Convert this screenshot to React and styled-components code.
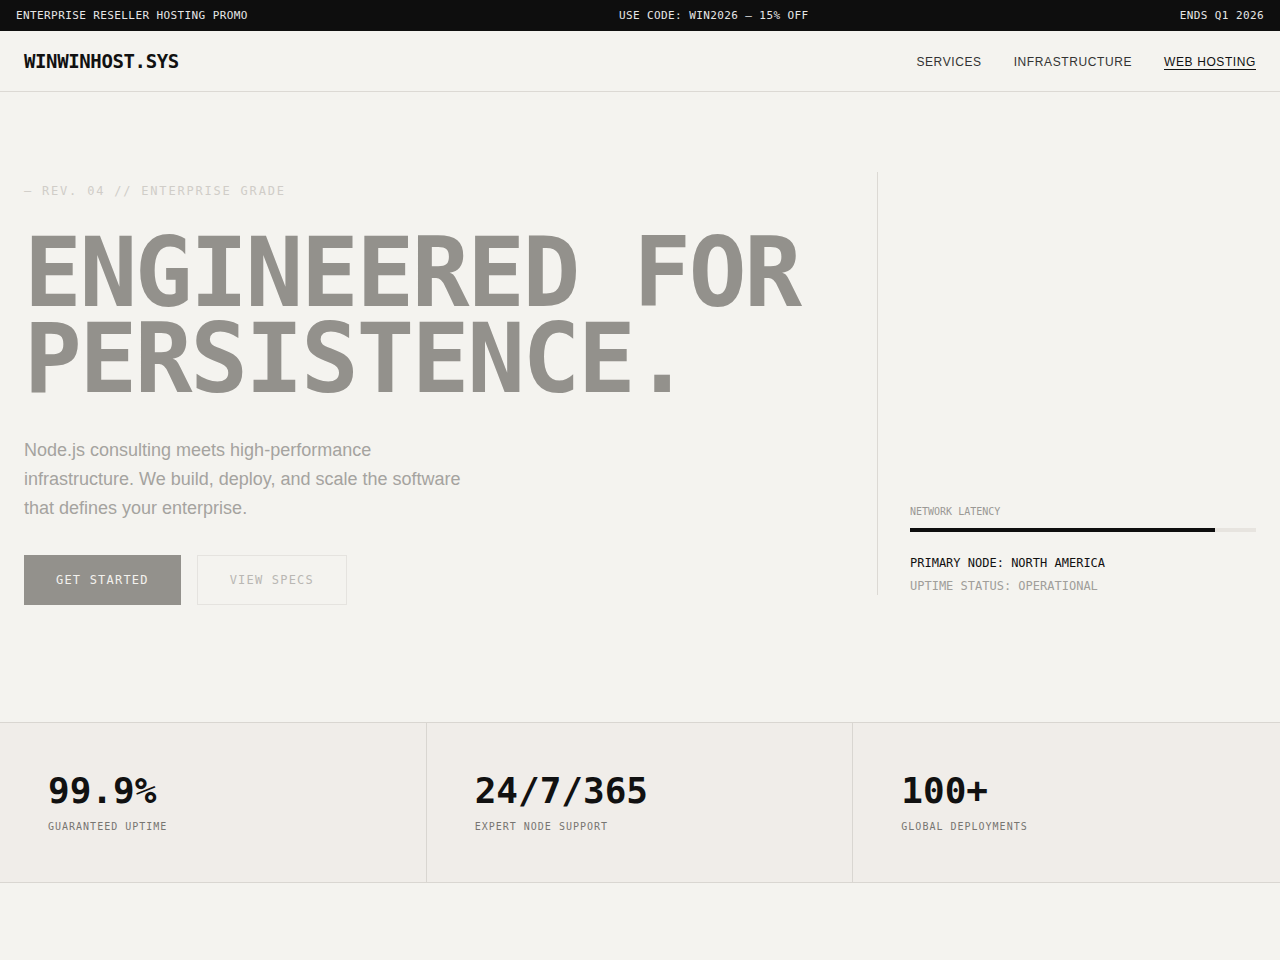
import React from "react";
import styled, { createGlobalStyle } from "styled-components";

const MONO = `"DejaVu Sans Mono", "Liberation Mono", monospace`;
const SANS = `"Liberation Sans", Arial, sans-serif`;

const GlobalStyle = createGlobalStyle`
  * { box-sizing: border-box; }
  html, body {
    margin: 0;
    padding: 0;
    background: #f4f3ef;
  }
  body {
    font-family: ${SANS};
    color: #111;
    -webkit-font-smoothing: antialiased;
  }
`;

const stats = [
  { value: "99.9%", label: "GUARANTEED UPTIME" },
  { value: "24/7/365", label: "EXPERT NODE SUPPORT" },
  { value: "100+", label: "GLOBAL DEPLOYMENTS" },
];

const App = () => {
  return (
    <Page>
      <GlobalStyle />
      <PromoBar>
        <PromoText>ENTERPRISE RESELLER HOSTING PROMO</PromoText>
        <PromoText>USE CODE: WIN2026 — 15% OFF</PromoText>
        <PromoText>ENDS Q1 2026</PromoText>
      </PromoBar>

      <Header>
        <Logo>WINWINHOST.SYS</Logo>
        <Nav>
          <NavLink>SERVICES</NavLink>
          <NavLink>INFRASTRUCTURE</NavLink>
          <NavLink active>WEB HOSTING</NavLink>
        </Nav>
      </Header>

      <Hero>
        <HeroMain>
          <Eyebrow>— REV. 04 // ENTERPRISE GRADE</Eyebrow>
          <Headline>
            ENGINEERED FOR
            <br />
            PERSISTENCE.
          </Headline>
          <Lead>
            Node.js consulting meets high-performance infrastructure. We
            build, deploy, and scale the software that defines your
            enterprise.
          </Lead>
          <Actions>
            <Button primary>GET STARTED</Button>
            <Button>VIEW SPECS</Button>
          </Actions>
        </HeroMain>

        <StatusPanel>
          <MetricLabel>NETWORK LATENCY</MetricLabel>
          <Meter>
            <MeterFill style={{ width: "88.2%" }} />
          </Meter>
          <StatusLines>
            <StatusLine>PRIMARY NODE: NORTH AMERICA</StatusLine>
            <StatusLine muted>UPTIME STATUS: OPERATIONAL</StatusLine>
          </StatusLines>
        </StatusPanel>
      </Hero>

      <Stats>
        {stats.map((s) => (
          <StatCell key={s.label}>
            <StatValue>{s.value}</StatValue>
            <StatLabel>{s.label}</StatLabel>
          </StatCell>
        ))}
      </Stats>
    </Page>
  );
};

export default App;

const Page = styled.div`
  min-height: 960px;
  background: #f4f3ef;
`;

/* promo bar */
const PromoBar = styled.div`
  height: 31px;
  padding: 0 16px;
  background: #0e0e0e;
  display: flex;
  align-items: center;
  justify-content: space-between;
`;

const PromoText = styled.span`
  font-family: ${MONO};
  font-size: 11px;
  letter-spacing: 0.4px;
  color: #e6e6e6;
`;

/* header */
const Header = styled.header`
  height: 61px;
  padding: 0 24px;
  border-bottom: 1px solid #dcd9d4;
  display: flex;
  align-items: center;
  justify-content: space-between;
`;

const Logo = styled.div`
  font-family: ${MONO};
  font-weight: 700;
  font-size: 19px;
  letter-spacing: -0.02em;
  color: #111;
`;

const Nav = styled.nav`
  margin-top: 2px;
  display: flex;
  gap: 32px;
`;

const NavLink = styled.a`
  font-family: ${SANS};
  font-size: 12px;
  letter-spacing: 0.6px;
  color: ${(p) => (p.active ? "#111" : "#333")};
  border-bottom: 1px solid ${(p) => (p.active ? "#111" : "transparent")};
  cursor: pointer;
`;

/* hero */
const Hero = styled.section`
  display: grid;
  grid-template-columns: 1fr 379px;
  padding: 80px 24px 117px;
`;

const HeroMain = styled.div`
  padding-top: 12px;
  display: flex;
  flex-direction: column;
  align-items: flex-start;
`;

const Eyebrow = styled.div`
  font-family: ${MONO};
  font-size: 12px;
  line-height: 14px;
  letter-spacing: 0.15em;
  color: #d0cdc8;
`;

const Headline = styled.h1`
  margin: 32px 0 0;
  font-family: ${MONO};
  font-weight: 700;
  font-size: 96px;
  line-height: 0.9;
  letter-spacing: -0.025em;
  color: #93918c;
`;

const Lead = styled.p`
  margin: 33px 0 0;
  max-width: 450px;
  font-family: ${SANS};
  font-size: 18px;
  line-height: 29px;
  color: #a5a39f;
`;

const Actions = styled.div`
  margin-top: 32px;
  display: flex;
  gap: 16px;
`;

const Button = styled.button`
  height: 50px;
  padding: 0 32px;
  font-family: ${MONO};
  font-size: 12px;
  letter-spacing: 0.1em;
  cursor: pointer;
  border: ${(p) => (p.primary ? "none" : "1px solid #e5e3df")};
  background: ${(p) => (p.primary ? "#93918c" : "transparent")};
  color: ${(p) => (p.primary ? "#f3f2ee" : "#b9b7b3")};
`;

const StatusPanel = styled.aside`
  margin-bottom: 10px;
  padding-left: 32px;
  border-left: 1px solid #dcd9d4;
  display: flex;
  flex-direction: column;
  justify-content: flex-end;
`;

const MetricLabel = styled.div`
  font-family: ${MONO};
  font-size: 10px;
  line-height: 14px;
  color: #9a9894;
`;

const Meter = styled.div`
  margin: 9px 0 22px;
  height: 4px;
  background: #e7e4df;
`;

const MeterFill = styled.div`
  height: 100%;
  background: #0e0e0e;
`;

const StatusLines = styled.div`
  display: flex;
  flex-direction: column;
  gap: 5px;
`;

const StatusLine = styled.div`
  font-family: ${MONO};
  font-size: 12px;
  line-height: 18px;
  color: ${(p) => (p.muted ? "#a09e9a" : "#111")};
`;

/* stats strip */
const Stats = styled.section`
  display: grid;
  grid-template-columns: repeat(3, 1fr);
  background: #f0ede9;
  border-top: 1px solid #d9d6d1;
  border-bottom: 1px solid #d9d6d1;
`;

const StatCell = styled.div`
  padding: 46px 48px 48px;
  border-right: 1px solid #d9d6d1;
  &:last-child {
    border-right: none;
  }
`;

const StatValue = styled.div`
  font-family: ${MONO};
  font-weight: 700;
  font-size: 36px;
  line-height: 1.2;
  color: #111;
`;

const StatLabel = styled.div`
  margin-top: 8px;
  font-family: ${MONO};
  font-size: 10px;
  line-height: 14px;
  letter-spacing: 1px;
  color: #777571;
`;
